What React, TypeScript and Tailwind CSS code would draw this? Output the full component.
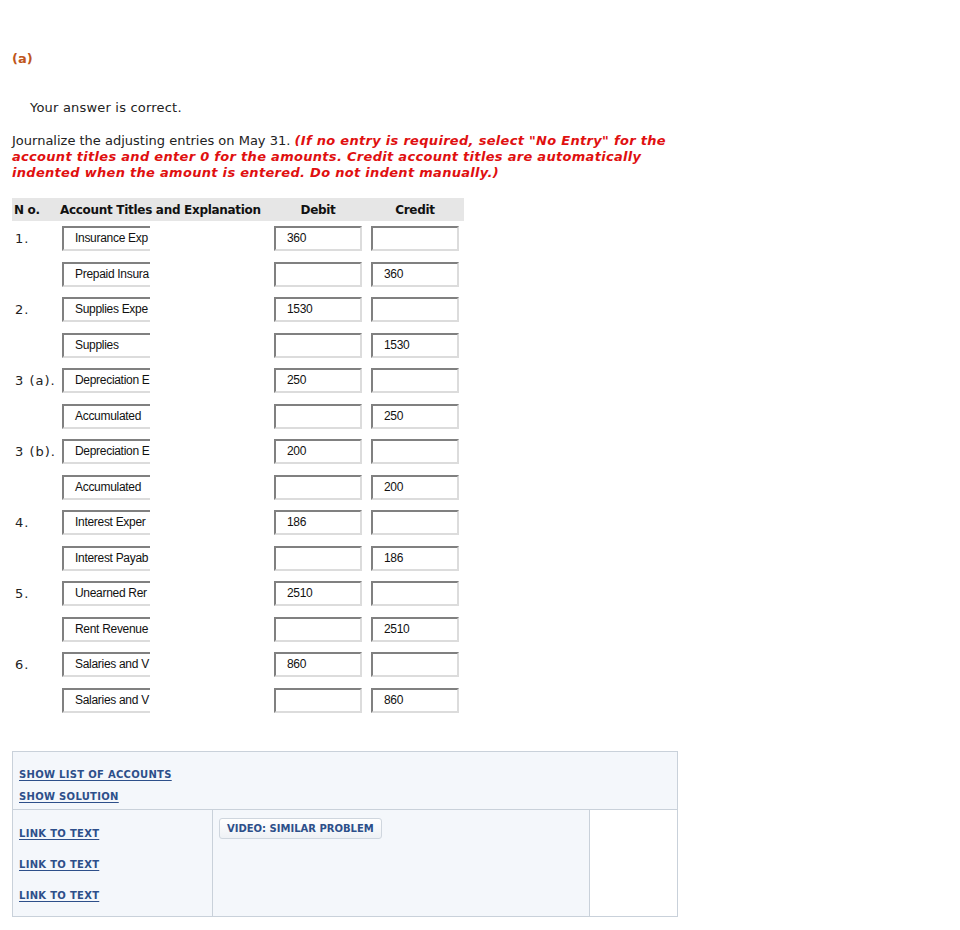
const FONT = "font-['Verdana','DejaVu_Sans',sans-serif]";

type Line = {
  no?: string;
  account: string;
  debit?: string;
  credit?: string;
};

const LINES: Line[] = [
  { no: "1.", account: "Insurance Exp", debit: "360" },
  { account: "Prepaid Insura", credit: "360" },
  { no: "2.", account: "Supplies Expe", debit: "1530" },
  { account: "Supplies", credit: "1530" },
  { no: "3 (a).", account: "Depreciation E", debit: "250" },
  { account: "Accumulated", credit: "250" },
  { no: "3 (b).", account: "Depreciation E", debit: "200" },
  { account: "Accumulated", credit: "200" },
  { no: "4.", account: "Interest Exper", debit: "186" },
  { account: "Interest Payab", credit: "186" },
  { no: "5.", account: "Unearned Rer", debit: "2510" },
  { account: "Rent Revenue", credit: "2510" },
  { no: "6.", account: "Salaries and V", debit: "860" },
  { account: "Salaries and V", credit: "860" },
];

// old-school inset text box
function Box({ value, cut }: { value?: string; cut?: boolean }) {
  return (
    <div
      className={
        "h-[25px] w-[88px] overflow-hidden whitespace-nowrap bg-white pl-[11px] font-['Liberation_Sans',Arial,sans-serif] text-[12px] leading-[21px] tracking-[-0.3px] text-[#111] border-t-2 border-l-2 border-b-2 border-t-[#808080] border-l-[#808080] border-b-[#dcdcdc] " +
        (cut ? "" : "border-r-2 border-r-[#dcdcdc]")
      }
    >
      {value}
    </div>
  );
}

function EntryRow({ line }: { line: Line }) {
  return (
    <div className="flex h-[35.5px] items-center">
      <div className="w-[50px] pl-[3px] text-[13px] tracking-[1px] text-[#222]">{line.no}</div>
      <div className="w-[212px]">
        <Box value={line.account} cut />
      </div>
      <div className="w-[97px]">
        <Box value={line.debit} />
      </div>
      <div className="w-[93px]">
        <Box value={line.credit} />
      </div>
    </div>
  );
}

function PanelLink({ children }: { children: string }) {
  return (
    <a
      href="#"
      className="text-[10px] font-bold leading-none tracking-[0.3px] text-[#2d4f8a] underline underline-offset-2"
    >
      {children}
    </a>
  );
}

export default function App() {
  return (
    <div className={`${FONT} min-h-[930px] bg-white pl-[12px] pt-[51px] text-[#222]`}>
      <div className="text-[13px] font-bold leading-[16px] text-[#c0561c]">(a)</div>

      <div className="mt-[33px] pl-[18px] text-[13px] leading-[16px] tracking-[0.2px]">Your answer is correct.</div>

      <p className="mt-[17px] w-[666px] text-[13px] leading-[16px]">
        Journalize the adjusting entries on May 31.{" "}
        <span className="font-bold italic tracking-[0.3px] text-[#e01010]">
          (If no entry is required, select "No Entry" for the account titles and enter 0 for the amounts. Credit
          account titles are automatically indented when the amount is entered. Do not indent manually.)
        </span>
      </p>

      <div className="mt-[17px] w-[452px]">
        <div className="flex h-[23px] items-center bg-[#e6e6e6] text-[12px] font-bold tracking-[-0.3px] text-[#111]">
          <div className="w-[48px] pl-[2px]">N o.</div>
          <div className="w-[214px] whitespace-nowrap">Account Titles and Explanation</div>
          <div className="mr-[9px] w-[88px] text-center">Debit</div>
          <div className="w-[88px] text-center">Credit</div>
        </div>
        <div>
          {LINES.map((l, i) => (
            <EntryRow key={i} line={l} />
          ))}
        </div>
      </div>

      <div className="mt-[33px] w-[666px] border border-[#c9d1da] bg-[#f4f7fb]">
        <div className="flex h-[57px] flex-col justify-end gap-[12px] pb-[7px] pl-[6px]">
          <PanelLink>SHOW LIST OF ACCOUNTS</PanelLink>
          <PanelLink>SHOW SOLUTION</PanelLink>
        </div>
        <div className="flex h-[107px] border-t border-[#c9d1da]">
          <div className="flex w-[200px] flex-col gap-[21px] border-r border-[#c9d1da] pl-[6px] pt-[19px]">
            <PanelLink>LINK TO TEXT</PanelLink>
            <PanelLink>LINK TO TEXT</PanelLink>
            <PanelLink>LINK TO TEXT</PanelLink>
          </div>
          <div className="flex-1 pl-[6px] pt-[5px]">
            <button className="h-[21px] rounded-[3px] border border-[#cfd6de] bg-gradient-to-b from-white to-[#eef1f5] px-[7px] text-[10px] font-bold text-[#2d4f8a]">
              VIDEO: SIMILAR PROBLEM
            </button>
          </div>
          <div className="w-[88px] border-l border-[#c9d1da] bg-white" />
        </div>
      </div>
    </div>
  );
}
